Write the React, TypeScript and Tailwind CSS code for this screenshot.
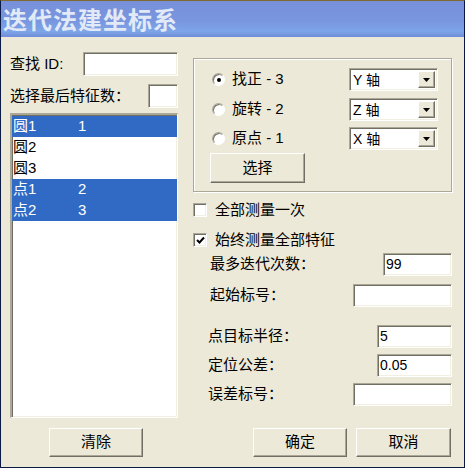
import React from 'react';

const sunken =
  'bg-white border border-t-[#aca899] border-l-[#aca899] border-b-white border-r-white shadow-[inset_1px_1px_0_#716f64,inset_-1px_-1px_0_#f1efe2]';
const raised =
  'bg-[#ece9d8] border border-t-white border-l-white border-b-[#716f64] border-r-[#716f64] shadow-[inset_-1px_-1px_0_#aca899]';

const items = [
  { name: '圆1', no: '1', sel: true },
  { name: '圆2', no: '', sel: false },
  { name: '圆3', no: '', sel: false },
  { name: '点1', no: '2', sel: true },
  { name: '点2', no: '3', sel: true },
];

const axes = [
  { label: '找正 - 3', axis: 'Y 轴', on: true },
  { label: '旋转 - 2', axis: 'Z 轴', on: false },
  { label: '原点 - 1', axis: 'X 轴', on: false },
];

function Radio({ on }: { on: boolean }) {
  return (
    <span className="w-[13px] h-[13px] rounded-full bg-white border border-t-[#aca899] border-l-[#aca899] border-r-white border-b-white shadow-[inset_1px_1px_0_#716f64] flex items-center justify-center">
      {on && <span className="w-[4px] h-[4px] rounded-full bg-black" />}
    </span>
  );
}

function Check({ on }: { on: boolean }) {
  return (
    <span className={`w-[14px] h-[14px] flex items-center justify-center ${sunken}`}>
      {on && (
        <svg width="9" height="9" viewBox="0 0 9 9">
          <path d="M1 4 L3.5 6.5 L8 1.5" fill="none" stroke="#000" strokeWidth="2" />
        </svg>
      )}
    </span>
  );
}

function Combo({ value }: { value: string }) {
  return (
    <div className={`w-[89px] h-[23px] flex items-center p-[2px] ${sunken}`}>
      <span className="flex-1 pl-[1px] text-[14px] leading-none">{value}</span>
      <span className={`w-[17px] h-full flex items-center justify-center ${raised}`}>
        <svg width="7" height="4" viewBox="0 0 7 4">
          <path d="M0 0 H7 L3.5 4 Z" fill="#000" />
        </svg>
      </span>
    </div>
  );
}

function Field({ label, width, value, mt, pl }: { label: string; width: string; value?: string; mt: string; pl: string }) {
  return (
    <div className={`flex items-center justify-between ${mt} ${pl}`}>
      <span className="text-[15px]">{label}</span>
      <div className={`${width} h-[23px] flex items-center px-[2px] text-[14px] ${sunken}`}>{value}</div>
    </div>
  );
}

export default function App() {
  return (
    <div className="w-[465px] h-[468px] flex flex-col bg-[#ece9d8] border border-[#0b1a44] border-t-[#7d6a2e] text-black font-['Liberation_Sans','Noto_Sans_CJK_SC',sans-serif] overflow-hidden">
      <div className="h-[36px] shrink-0 flex items-center pl-[2px] bg-[linear-gradient(180deg,#7890da_0%,#7896de_55%,#7ea5e8_85%,#6f8cd8_100%)]">
        <span className="text-[24px] font-bold leading-none tracking-[1px] text-[#e2eaf8] font-['Noto_Sans_CJK_SC',sans-serif]">迭代法建坐标系</span>
      </div>

      <div className="flex pl-[9px]">
        <div className="w-[168px] flex flex-col">
          <div className="mt-[15px] h-[24px] flex items-center justify-between">
            <span className="text-[15px]">查找 ID:</span>
            <div className={`w-[95px] h-[24px] ${sunken}`} />
          </div>
          <div className="mt-[8px] h-[24px] flex items-center justify-between">
            <span className="text-[15px]">选择最后特征数：</span>
            <div className={`w-[30px] h-[24px] ${sunken}`} />
          </div>
          <div className={`mt-[5px] h-[305px] pt-[1px] ${sunken} border-l-2 border-t-2`}>
            {items.map((it) => (
              <div
                key={it.name}
                className={`h-[21px] flex items-center pl-[1px] text-[15px] ${it.sel ? 'bg-[#316ac5] text-white' : 'text-black'}`}
              >
                <span className="w-[65px]">{it.name}</span>
                <span>{it.no}</span>
              </div>
            ))}
          </div>
        </div>

        <div className="ml-[15px] w-[259px] flex flex-col">
          <div className="mt-[21px] h-[134px] border border-[#aca899] shadow-[inset_1px_1px_0_#fff,1px_1px_0_#fff] flex flex-col pt-[9px]">
            {axes.map((a, i) => (
              <div key={a.label} className={`h-[23px] flex items-center pl-[18px] pr-[13px] ${i === 1 ? 'mt-[7px]' : i === 2 ? 'mt-[6px]' : ''}`}>
                <Radio on={a.on} />
                <span className="ml-[7px] text-[15px] flex-1">{a.label}</span>
                <Combo value={a.axis} />
              </div>
            ))}
            <button className={`mt-[3px] ml-[16px] w-[95px] h-[30px] text-[15px] ${raised}`}>选择</button>
          </div>

          <div className="mt-[7px] h-[22px] flex items-center">
            <Check on={false} />
            <span className="ml-[8px] text-[15px]">全部测量一次</span>
          </div>
          <div className="mt-[8px] h-[22px] flex items-center">
            <Check on={true} />
            <span className="ml-[8px] text-[15px]">始终测量全部特征</span>
          </div>

          <Field label="最多迭代次数：" width="w-[69px]" value="99" mt="mt-[2px]" pl="pl-[17px]" />
          <Field label="起始标号：" width="w-[99px]" mt="mt-[8px]" pl="pl-[17px]" />
          <Field label="点目标半径：" width="w-[75px]" value="5" mt="mt-[18px]" pl="pl-[15px]" />
          <Field label="定位公差：" width="w-[75px]" value="0.05" mt="mt-[6px]" pl="pl-[15px]" />
          <Field label="误差标号：" width="w-[99px]" mt="mt-[6px]" pl="pl-[15px]" />
        </div>
      </div>

      <div className="mt-[10px] flex pl-[48px]">
        <button className={`w-[94px] h-[29px] text-[15px] ${raised}`}>清除</button>
        <button className={`ml-[110px] w-[94px] h-[29px] text-[15px] ${raised}`}>确定</button>
        <button className={`ml-[9px] w-[95px] h-[29px] text-[15px] ${raised}`}>取消</button>
      </div>
    </div>
  );
}
